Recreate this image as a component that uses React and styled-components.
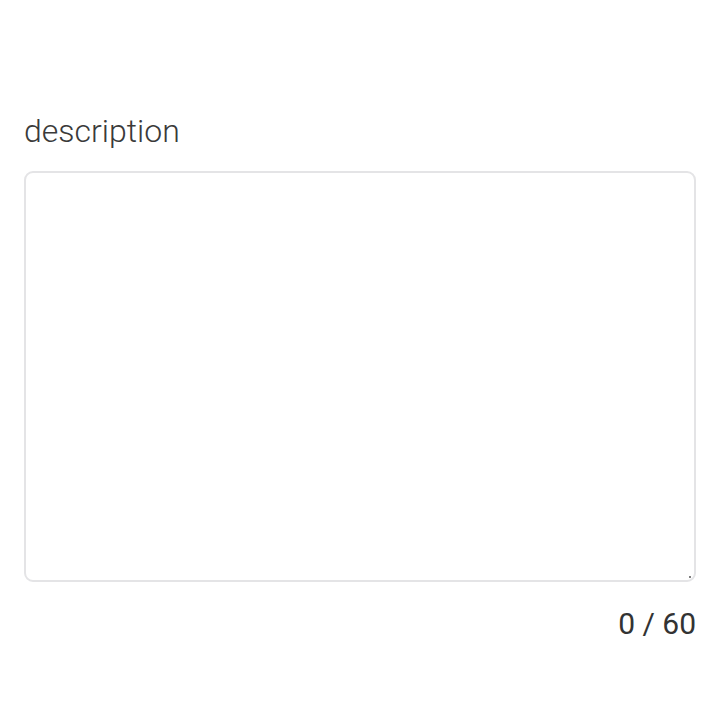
import React, { useState } from 'react'
import styled, { createGlobalStyle } from 'styled-components'

const GlobalStyle = createGlobalStyle`
	body {
		margin: 0;
		background: #ffffff;
		font-family: Roboto, 'Liberation Sans', sans-serif;
	}
`

const Field = styled.div`
	display: flex;
	flex-direction: column;
	padding: 113px 24px 0 24px;
`

const Label = styled.label`
	font-size: 32px;
	font-weight: 300;
	color: #3a3a3a;
	line-height: 36px;
	margin-bottom: 22px;
`

const AreaBox = styled.div`
	position: relative;
	display: flex;
`

const TextArea = styled.textarea`
	box-sizing: border-box;
	width: 100%;
	height: 411px;
	border: 2px solid #e4e4e6;
	border-radius: 9px;
	padding: 12px 14px;
	font-family: inherit;
	font-size: 24px;
	outline: none;
	resize: none;
	background: #fff;
`

// tiny grip mark in the bottom right corner
const Grip = styled.span`
	position: absolute;
	right: 5px;
	bottom: 4px;
	width: 2px;
	height: 2px;
	border-radius: 1px;
	background: #555;
	pointer-events: none;
`

const Counter = styled.div`
	align-self: flex-end;
	font-size: 30px;
	color: #333;
	line-height: 36px;
	margin-top: 24px;
`

const App = () => {
	const [value, setValue] = useState('')
	const max = 60

	return (
		<>
			<GlobalStyle />
			<Field>
				<Label htmlFor="description">description</Label>
				<AreaBox>
					<TextArea
						id="description"
						value={value}
						maxLength={max}
						onChange={(e) => setValue(e.target.value)}
					/>
					<Grip />
				</AreaBox>
				<Counter>
					{value.length} / {max}
				</Counter>
			</Field>
		</>
	)
}

export default App
